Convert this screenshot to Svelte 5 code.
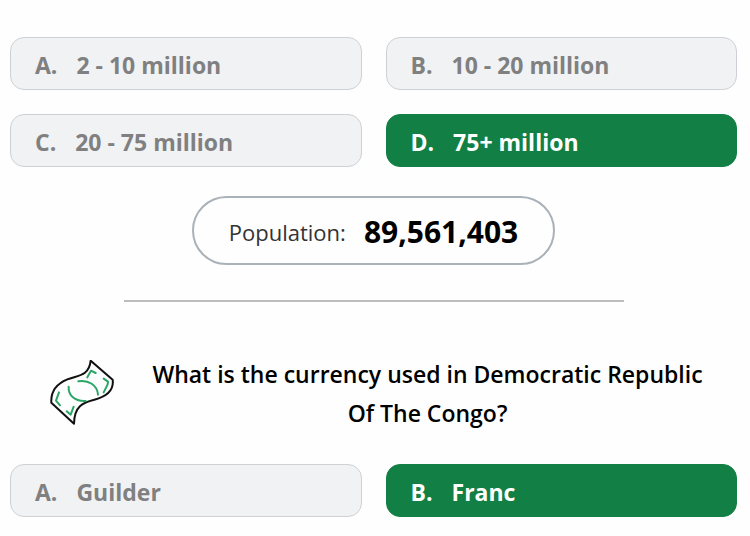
<script lang="ts">
	type Option = { text: string; correct?: boolean };

	const letters = ['A', 'B', 'C', 'D'];

	const population: Option[] = [
		{ text: '2 - 10 million' },
		{ text: '10 - 20 million' },
		{ text: '20 - 75 million' },
		{ text: '75+ million', correct: true }
	];

	const currency: Option[] = [{ text: 'Guilder' }, { text: 'Franc', correct: true }];
</script>

{#snippet options(items: Option[])}
	<div class="options">
		{#each items as item, i}
			<button type="button" class="option" class:correct={item.correct}>
				<span>{letters[i]}.</span>
				<span>{item.text}</span>
			</button>
		{/each}
	</div>
{/snippet}

<main class="quiz">
	{@render options(population)}

	<p class="answer">
		<span>Population:</span>
		<strong>89,561,403</strong>
	</p>

	<hr />

	<section>
		<header class="question">
			<svg class="icon" viewBox="30 30 198 204" fill="none" aria-hidden="true">
				<path
					class="note"
					d="M152 32 L218 89 C222 118 202 139 163 149 C128 158 103 168 102 221 L34 158 C32 126 48 102 82 88 C112 76 147 80 152 32 Z"
				/>
				<path
					class="detail"
					d="M86 110 C84 136 105 155 137 153 M115 94 C145 89 172 105 174 134 M142 82 L153 62 L167 69 M191 86 L204 95 L203 103 L191 127 M57 127 L48 152 L60 166 M80 184 L92 194 L101 170"
				/>
			</svg>
			<h2>What is the currency used in Democratic Republic Of The Congo?</h2>
		</header>

		{@render options(currency)}
	</section>
</main>

<style>
	:global(body) {
		margin: 0;
		background: #fefefe;
	}

	.quiz {
		padding: 37px 13px 19px 10px;
		color: #000;
		font-family: 'Segoe UI', 'Open Sans', 'Noto Sans', sans-serif;
	}

	.options {
		display: grid;
		grid-template-columns: 1fr 1fr;
		gap: 24px;
	}

	.option {
		display: flex;
		align-items: center;
		gap: 19px;
		height: 53px;
		padding: 2px 24px 0;
		border: 1px solid #cdd1d5;
		border-radius: 14px;
		background: #f1f2f4;
		color: #808080;
		font: inherit;
		font-size: 23px;
		font-weight: 700;
		text-align: left;
		cursor: pointer;
	}

	.option.correct {
		border-color: #128044;
		background: #128044;
		color: #fff;
	}

	.answer {
		display: flex;
		align-items: center;
		justify-content: center;
		gap: 18px;
		box-sizing: border-box;
		width: fit-content;
		height: 69px;
		margin: 29px auto 35px;
		padding: 2px 35px 0;
		border: 2px solid #abb1b8;
		border-radius: 35px;
		color: #333;
		font-size: 22px;
	}

	.answer strong {
		color: #000;
		font-size: 30px;
		font-weight: 700;
	}

	hr {
		width: 500px;
		max-width: 100%;
		margin: 0 auto;
		border: 0;
		border-top: 2px solid #bdbdbd;
	}

	.question {
		display: flex;
		align-items: center;
		gap: 24px;
		margin: 53px 0 31px;
		padding: 0 22px 0 40px;
	}

	.icon {
		flex: none;
		width: 66px;
		height: 68px;
	}

	.note,
	.detail {
		stroke: #111;
		stroke-width: 6;
		stroke-linejoin: round;
		stroke-linecap: round;
	}

	.detail {
		stroke: #2aa666;
	}

	h2 {
		flex: 1;
		margin: 0;
		font-size: 23px;
		font-weight: 600;
		line-height: 39px;
		text-align: center;
	}
</style>
